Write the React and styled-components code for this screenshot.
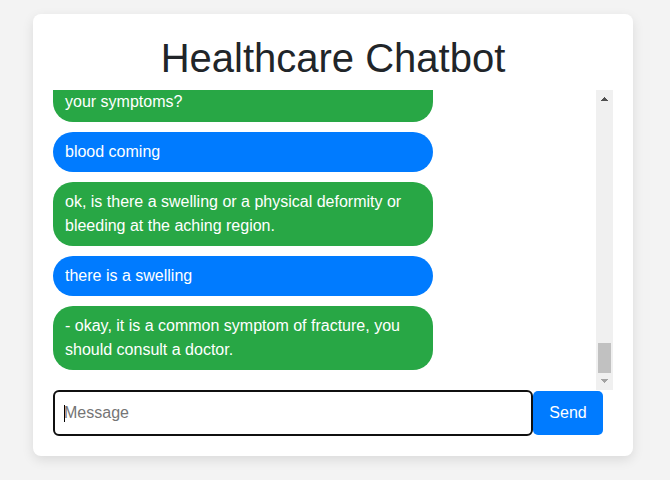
import React, { useLayoutEffect, useRef, useState } from "react";
import styled, { createGlobalStyle } from "styled-components";

const GlobalStyle = createGlobalStyle`
  *, *::before, *::after { box-sizing: border-box; }
  body {
    margin: 0;
    background: #f3f3f3;
    color: #212529;
    font-family: "Liberation Sans", Arial, sans-serif;
    font-size: 16px;
    line-height: 24px;
  }
`;

const Page = styled.main`
  padding: 14px 37px 24px 33px;
`;

const Card = styled.section`
  max-width: 600px;
  margin: 0 auto;
  padding: 20px;
  background: #fff;
  border-radius: 8px;
  box-shadow: 0 4px 12px rgba(0, 0, 0, 0.1);
`;

const Title = styled.h1`
  margin: 0 0 8px;
  font-size: 40px;
  font-weight: 400;
  line-height: 48px;
  text-align: center;
`;

const ChatArea = styled.div`
  display: flex;
  height: 300px;
`;

const MessageList = styled.div`
  flex: 1;
  display: flex;
  flex-direction: column;
  align-items: flex-start;
  gap: 10px;
  padding-bottom: 20px;
  overflow-y: scroll;
  scrollbar-width: none;
`;

const Bubble = styled.div`
  flex: none;
  width: 70%;
  padding: 8px 12px;
  border-radius: ${(p) => (p.$continued ? "0 0 20px 20px" : "20px")};
  background: ${(p) => (p.$from === "user" ? "#007bff" : "#28a745")};
  color: #fff;
`;

const ScrollTrack = styled.div`
  flex: none;
  width: 17px;
  display: flex;
  flex-direction: column;
  justify-content: space-between;
  background: #f0f0f0;
`;

const ScrollArrow = styled.svg`
  display: block;
  width: 17px;
  height: 17px;
  fill: ${(p) => (p.$dim ? "#a3a3a3" : "#505050")};
`;

const ScrollEnd = styled.div`
  display: flex;
  flex-direction: column;
`;

const ScrollThumb = styled.div`
  height: 30px;
  margin: 0 2px;
  background: #c1c1c1;
`;

const Composer = styled.form`
  display: flex;
  align-items: center;
  padding-right: 10px;
`;

const Field = styled.div`
  position: relative;
  flex: 1;
  display: flex;
`;

const MessageInput = styled.input`
  width: 100%;
  min-width: 0;
  height: 46px;
  padding: 0 9px;
  border: 2px solid #101010;
  border-radius: 6px;
  outline: none;
  background: #fff;
  color: #212529;
  caret-color: transparent;
  font: inherit;

  &::placeholder {
    color: #757575;
    opacity: 1;
  }
`;

const Caret = styled.span`
  position: absolute;
  top: 15px;
  left: 11px;
  width: 1px;
  height: 17px;
  background: #000;
  pointer-events: none;
`;

const SendButton = styled.button`
  flex: none;
  width: 70px;
  height: 44px;
  padding: 0;
  border: 0;
  border-radius: 5px;
  background: #007bff;
  color: #fff;
  font: inherit;
  cursor: pointer;
`;

const messages = [
  { from: "bot", text: "your symptoms?", continued: true },
  { from: "user", text: "blood coming" },
  {
    from: "bot",
    text: "ok, is there a swelling or a physical deformity or bleeding at the aching region.",
  },
  { from: "user", text: "there is a swelling" },
  {
    from: "bot",
    text: "- okay, it is a common symptom of fracture, you should consult a doctor.",
  },
];

export default function App() {
  const listRef = useRef(null);
  const [draft, setDraft] = useState("");

  useLayoutEffect(() => {
    listRef.current.scrollTop = listRef.current.scrollHeight;
  }, []);

  return (
    <>
      <GlobalStyle />
      <Page>
        <Card>
          <Title>Healthcare Chatbot</Title>
          <ChatArea>
            <MessageList ref={listRef} role="log">
              {messages.map((m) => (
                <Bubble key={m.text} $from={m.from} $continued={m.continued}>
                  {m.text}
                </Bubble>
              ))}
            </MessageList>
            <ScrollTrack aria-hidden="true">
              <ScrollArrow viewBox="0 0 17 17" shapeRendering="crispEdges">
                <path d="M8 7h1v1h1v1h1v1h1v1H5v-1h1v-1h1v-1h1z" />
              </ScrollArrow>
              <ScrollEnd>
                <ScrollThumb />
                <ScrollArrow $dim viewBox="0 0 17 17" shapeRendering="crispEdges">
                  <path d="M5 6h7v1h-1v1h-1v1H9v1H8V9H7V8H6V7H5z" />
                </ScrollArrow>
              </ScrollEnd>
            </ScrollTrack>
          </ChatArea>
          <Composer onSubmit={(e) => e.preventDefault()}>
            <Field>
              <MessageInput
                type="text"
                aria-label="Message"
                placeholder="Message"
                value={draft}
                onChange={(e) => setDraft(e.target.value)}
              />
              {draft === "" && <Caret />}
            </Field>
            <SendButton type="submit">Send</SendButton>
          </Composer>
        </Card>
      </Page>
    </>
  );
}
